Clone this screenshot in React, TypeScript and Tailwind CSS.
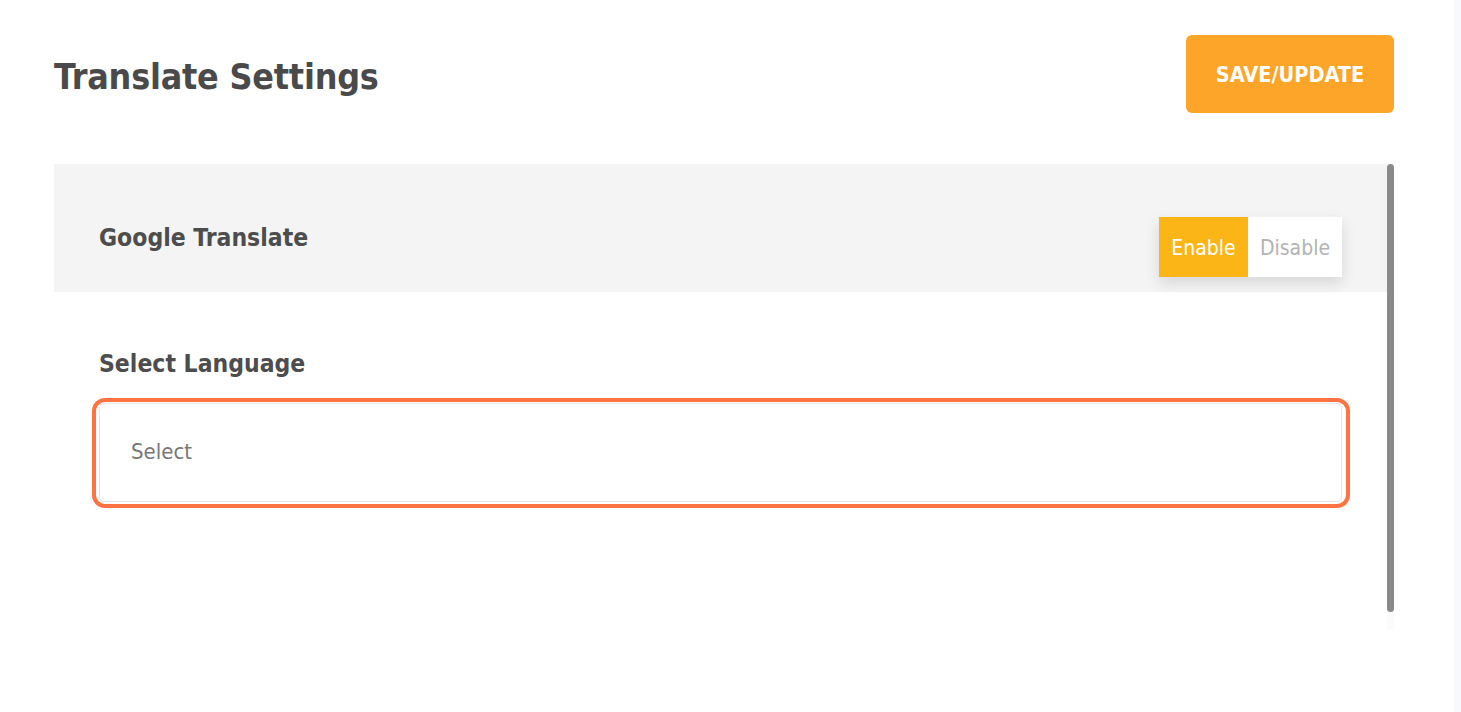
import React from "react";

export default function App() {
  const font = { fontFamily: '"DejaVu Sans Condensed", "Roboto", "Liberation Sans", sans-serif' };
  return (
    <div className="flex h-[712px] w-full bg-white" style={font}>
      <div className="flex-1 pl-[54px] pr-[60px]">
        <div className="flex h-[78px] mt-[35px] items-center justify-between">
          <h1 className="mt-[6px] text-[35.5px] font-bold text-[#4a4a4a] tracking-[-0.2px]">Translate Settings</h1>
          <button className="h-[78px] w-[208px] rounded-[6px] bg-[#fda529] pt-[3px] text-[21.5px] font-bold text-white">
            SAVE/UPDATE
          </button>
        </div>
        <div className="mt-[51px] flex h-[466px]">
          <div className="flex-1">
            <div className="flex h-[128px] justify-between bg-[#f4f4f4] pl-[45px] pr-[45px]">
              <div className="pt-[58px] text-[24.5px] leading-[32px] font-bold text-[#4d4d4d]">Google Translate</div>
              <div className="mt-[53px] flex h-[60px] shadow-[0_6px_14px_rgba(0,0,0,0.12)]">
                <div className="flex w-[89px] items-center justify-center bg-[#fbb516] pt-[3px] text-[21px] text-white">Enable</div>
                <div className="flex w-[94px] items-center justify-center bg-white pt-[3px] text-[21px] text-[#b3b3b3]">Disable</div>
              </div>
            </div>
            <div className="pl-[38px] pr-[37px]">
              <div className="mt-[56px] pl-[7px] text-[24.5px] leading-[32px] font-bold text-[#4d4d4d]">Select Language</div>
              <div className="mt-[18px] h-[110px] rounded-[13px] border-[4px] border-[#ff7342] pt-[1px] pb-[2px] pl-[3px] pr-[4px]">
                <div className="flex h-full items-center rounded-[5px] border border-[#e6e6e6] bg-white pl-[31px] pb-[2px] text-[22px] text-[#777777]">
                  Select
                </div>
              </div>
            </div>
          </div>
          <div className="flex w-[7px] flex-col bg-[#fafbfd]">
            <div className="h-[448px] rounded-full bg-[#8a8a8a]"></div>
          </div>
        </div>
      </div>
      <div className="w-[7px] bg-[#f8f9fc]"></div>
    </div>
  );
}
